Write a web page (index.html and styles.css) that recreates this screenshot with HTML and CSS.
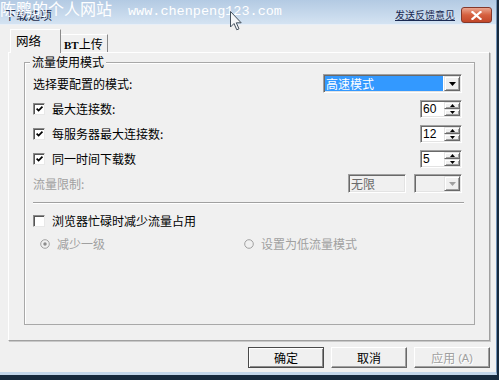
FILE: index.html
```html
<!DOCTYPE html>
<html lang="zh-CN">
<head>
<meta charset="utf-8">
<title>下载选项</title>
<link rel="stylesheet" href="styles.css">
</head>
<body>
<div class="window">
  <div class="titlebar">
    <span class="title">下载选项</span>
    <a class="feedback">发送反馈意见</a>
    <span class="close"><svg width="11" height="9" viewBox="0 0 11 9"><path d="M1.5 1 L9.5 8 M9.5 1 L1.5 8" stroke="#fff" stroke-width="2.2" stroke-linecap="square"/></svg></span>
    <div class="watermark"><span class="wm-cn">陈鹏的个人网站</span><span class="wm-url">www.chenpeng123.com</span></div>
    <svg class="cursor" width="13" height="20" viewBox="0 0 13 20"><path d="M0.5 0.5 L0.5 16 L4 12.5 L6.8 18.8 L9 17.8 L6.3 11.8 L11.2 11.8 Z" fill="#f4f6f8" stroke="#44505c" stroke-width="1"/></svg>
  </div>
  <div class="main">
    <div class="tabs">
      <div class="tab active">网络</div>
      <div class="tab"><span class="bt">BT</span>上传</div>
    </div>
    <div class="panel">
      <fieldset class="group">
        <legend>流量使用模式</legend>
        <div class="row">
          <span>选择要配置的模式:</span>
          <div class="combo sunken">
            <span class="combo-text">高速模式</span>
            <span class="sbtn combo-btn"><svg width="7" height="4" viewBox="0 0 7 4"><polygon points="0,0 7,0 3.5,4" fill="#000"/></svg></span>
          </div>
        </div>
        <div class="row">
          <label class="chk"><span class="cb"><svg width="10" height="10" viewBox="0 0 10 10"><path d="M1.8 4.6 L4 6.8 L8.3 2.3" fill="none" stroke="#000" stroke-width="1.9"/></svg></span>最大连接数:</label>
          <div class="spin sunken">
            <span class="spin-text">60</span>
            <span class="spin-btns"><span class="sbtn"><svg width="5" height="3" viewBox="0 0 5 3"><polygon points="2.5,0 5,3 0,3" fill="#000"/></svg></span><span class="sbtn"><svg width="5" height="3" viewBox="0 0 5 3"><polygon points="0,0 5,0 2.5,3" fill="#000"/></svg></span></span>
          </div>
        </div>
        <div class="row">
          <label class="chk"><span class="cb"><svg width="10" height="10" viewBox="0 0 10 10"><path d="M1.8 4.6 L4 6.8 L8.3 2.3" fill="none" stroke="#000" stroke-width="1.9"/></svg></span>每服务器最大连接数:</label>
          <div class="spin sunken">
            <span class="spin-text">12</span>
            <span class="spin-btns"><span class="sbtn"><svg width="5" height="3" viewBox="0 0 5 3"><polygon points="2.5,0 5,3 0,3" fill="#000"/></svg></span><span class="sbtn"><svg width="5" height="3" viewBox="0 0 5 3"><polygon points="0,0 5,0 2.5,3" fill="#000"/></svg></span></span>
          </div>
        </div>
        <div class="row">
          <label class="chk"><span class="cb"><svg width="10" height="10" viewBox="0 0 10 10"><path d="M1.8 4.6 L4 6.8 L8.3 2.3" fill="none" stroke="#000" stroke-width="1.9"/></svg></span>同一时间下载数</label>
          <div class="spin sunken">
            <span class="spin-text">5</span>
            <span class="spin-btns"><span class="sbtn"><svg width="5" height="3" viewBox="0 0 5 3"><polygon points="2.5,0 5,3 0,3" fill="#000"/></svg></span><span class="sbtn"><svg width="5" height="3" viewBox="0 0 5 3"><polygon points="0,0 5,0 2.5,3" fill="#000"/></svg></span></span>
          </div>
        </div>
        <div class="row">
          <span class="disabled">流量限制:</span>
          <div class="limit">
            <span class="edit sunken">无限</span>
            <div class="combo small sunken">
              <span class="combo-text off"></span>
              <span class="sbtn combo-btn"><svg width="7" height="4" viewBox="0 0 7 4"><polygon points="0,0 7,0 3.5,4" fill="#a0a0a0"/></svg></span>
            </div>
          </div>
        </div>
        <div class="sep"></div>
        <div class="row">
          <label class="chk"><span class="cb"></span>浏览器忙碌时减少流量占用</label>
        </div>
        <div class="row radios">
          <span class="radio disabled"><svg width="10" height="10" viewBox="0 0 10 10"><circle cx="5" cy="5" r="4.3" fill="#f0f0f0" stroke="#a0a0a0"/><circle cx="5" cy="5" r="1.7" fill="#8c8c8c"/></svg>减少一级</span>
          <span class="radio disabled"><svg width="10" height="10" viewBox="0 0 10 10"><circle cx="5" cy="5" r="4.3" fill="#f0f0f0" stroke="#a0a0a0"/></svg>设置为低流量模式</span>
        </div>
      </fieldset>
    </div>
    <div class="btns">
      <span class="btn default">确定</span>
      <span class="btn">取消</span>
      <span class="btn off">应用<span class="acc">(A)</span></span>
    </div>
  </div>
</div>
</body>
</html>
```

FILE: styles.css
```css
* { box-sizing: border-box; }
html, body { margin: 0; padding: 0; }
body {
  width: 499px;
  height: 380px;
  overflow: hidden;
  background: #16293d;
  font-family: "Noto Sans CJK SC", "Noto Sans", sans-serif;
  font-size: 12px;
  line-height: 14px;
  color: #000;
}
.window {
  width: 497px;
  height: 375px;
  background: #f0f0f0;
  border-right: 1px solid #7090b4;
  border-bottom: 3px solid #c3d6ea;
  display: flex;
  flex-direction: column;
}
.titlebar {
  position: relative;
  height: 25px;
  flex: none;
  display: flex;
  align-items: center;
  padding: 6px 4px 0 4px;
  background: linear-gradient(#b3cae3, #d4e3f2);
  border-bottom: 1px solid #e9eff7;
}
.title { flex: 1; color: #1c2c4c; }
.feedback {
  font-size: 10px;
  line-height: 12px;
  color: #1a2a52;
  text-decoration: underline;
  margin-right: 6px;
}
.close {
  width: 31px;
  height: 16px;
  border: 1px solid #84382a;
  border-radius: 3px;
  background: linear-gradient(#eaa58f, #d5603f 50%, #c2472a);
  display: flex;
  align-items: center;
  justify-content: center;
}
.watermark {
  position: absolute;
  left: 0;
  top: 0;
  color: #fff;
  line-height: 16px;
  white-space: nowrap;
}
.wm-cn { font-size: 16px; }
.wm-url {
  font-family: "Liberation Mono", monospace;
  font-size: 13.5px;
  margin-left: 16px;
}
.cursor { position: absolute; left: 230px; top: 11px; }

.main {
  flex: 1;
  display: flex;
  flex-direction: column;
  padding: 4px 6px 0 8px;
}
.tabs {
  position: relative;
  z-index: 1;
  height: 23px;
  display: flex;
  align-items: flex-end;
  padding-left: 2px;
}
.tab {
  height: 18px;
  padding: 2px 4px 0 3px;
  border-top: 1px solid #fff;
  border-right: 1px solid #8a8a8a;
}
.tab.active {
  width: 51px;
  height: 24px;
  margin-bottom: -1px;
  padding: 4px 0 0 5px;
  font-size: 12.5px;
  background: #f0f0f0;
  border-left: 1px solid #fff;
  border-right: 1px solid #8a8a8a;
}
.bt {
  font-family: "Liberation Serif", serif;
  font-weight: bold;
  font-size: 11px;
}
.panel {
  height: 289px;
  display: flex;
  flex-direction: column;
  border: 1px solid;
  border-color: #fff #a0a0a0 #a0a0a0 #fff;
  box-shadow: 1px 1px 0 #c8c8c8;
}
.group {
  flex: 1;
  margin: 2px 14px 15px 15px;
  padding: 2px 12px 0 8px;
  border: 1px solid #a8a8a8;
  box-shadow: inset 1px 1px 0 #fff;
  min-width: 0;
}
.group legend {
  padding: 0 2px;
  margin-left: -3px;
  line-height: 14px;
  background: #f0f0f0;
}
.row {
  height: 25px;
  display: flex;
  align-items: center;
  justify-content: space-between;
}
.chk { display: flex; align-items: center; gap: 7px; }
.cb {
  width: 12px;
  height: 12px;
  background: #fff;
  border: 1px solid;
  border-color: #8a8a8a #e8e8e8 #e8e8e8 #8a8a8a;
  box-shadow: inset 1px 1px 0 #555;
  display: flex;
  align-items: center;
  justify-content: center;
}
.cb svg { margin: 1px 0 0 1px; }
.sunken {
  border: 1px solid;
  border-color: #a0a0a0 #fff #fff #a0a0a0;
  box-shadow: inset 1px 1px 0 #696969, inset -1px -1px 0 #e3e3e3;
  padding: 1px;
}
.sbtn {
  background: #f0f0f0;
  border: 1px solid;
  border-color: #e3e3e3 #696969 #696969 #e3e3e3;
  box-shadow: inset 1px 1px 0 #fff, inset -1px -1px 0 #a0a0a0;
  display: flex;
  align-items: center;
  justify-content: center;
}
.combo {
  width: 139px;
  height: 19px;
  display: flex;
  background: #fff;
}
.combo-text {
  flex: 1;
  background: #3399ff;
  color: #fff;
  padding-left: 1px;
  line-height: 15px;
  margin-right: 1px;
}
.combo-text.off { background: #f0f0f0; }
.combo-btn { width: 16px; }
.combo.small { width: 48px; background: #f0f0f0; }
.spin {
  width: 42px;
  height: 18px;
  display: flex;
  background: #fff;
}
.spin-text {
  flex: 1;
  font-family: "Liberation Sans", sans-serif;
  font-size: 12px;
  line-height: 14px;
  padding-left: 1px;
}
.spin-btns {
  width: 16px;
  display: flex;
  flex-direction: column;
}
.spin-btns .sbtn { flex: 1; }
.disabled { color: #a0a0a0; }
.limit { display: flex; align-items: center; gap: 8px; }
.edit {
  width: 58px;
  height: 19px;
  background: #f0f0f0;
  color: #6a6a6a;
  line-height: 15px;
  padding: 1px 2px;
}
.sep {
  height: 2px;
  border-top: 1px solid #a0a0a0;
  border-bottom: 1px solid #fff;
  margin: 6px -2px 4px 0;
}
.row.radios {
  height: 22px;
  justify-content: flex-start;
  padding-left: 7px;
}
.radio { display: flex; align-items: center; gap: 7px; }
.radio:first-child { width: 204px; }
.btns {
  display: flex;
  justify-content: flex-end;
  gap: 7px;
  margin-top: 6px;
}
.btn {
  width: 76px;
  height: 21px;
  display: flex;
  align-items: center;
  justify-content: center;
  background: #f0f0f0;
  border: 1px solid;
  border-color: #fff #696969 #696969 #fff;
  box-shadow: inset -1px -1px 0 #a0a0a0;
}
.btn.default {
  border-color: #4a4a4a;
  box-shadow: inset 1px 1px 0 #fff, inset -1px -1px 0 #8a8a8a;
}
.btn.off { color: #a0a0a0; text-shadow: 1px 1px 0 #fff; }
.acc {
  font-family: "Liberation Sans", sans-serif;
  font-size: 11px;
  margin-left: 3px;
}
```
